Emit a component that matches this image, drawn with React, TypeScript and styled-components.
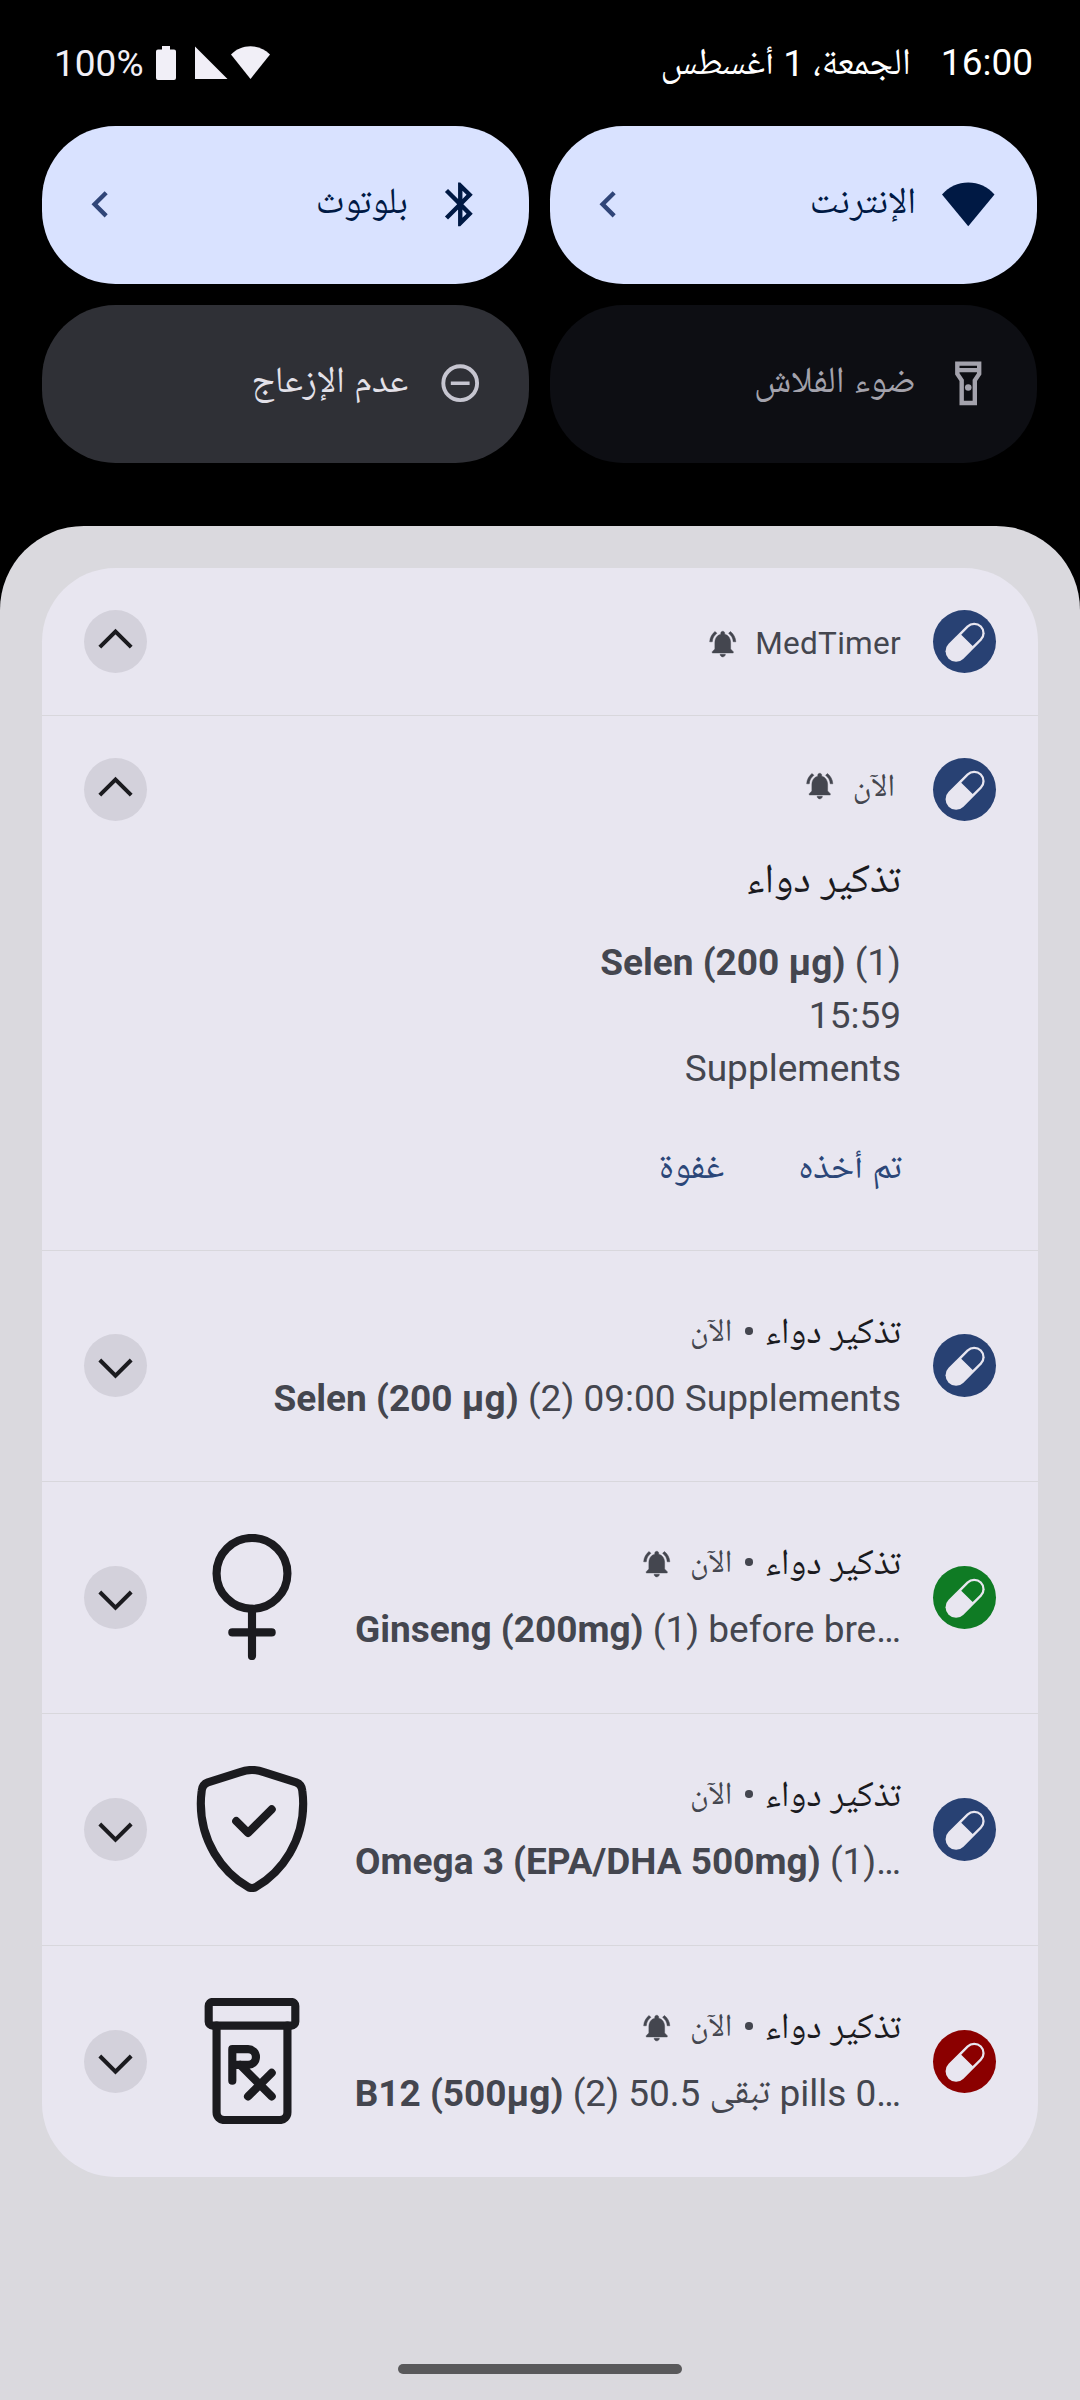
import React from "react";
import styled, { createGlobalStyle } from "styled-components";

const GlobalStyle = createGlobalStyle`
  * { box-sizing: border-box; }
  body { margin: 0; background: #000; }
`;

const ink = "#1b1b1f";
const muted = "#44464f";
const cardColor = "#e8e6f0";

const Screen = styled.div`
  width: 1080px;
  height: 2400px;
  background: #000;
  display: flex;
  flex-direction: column;
  overflow: hidden;
  font-family: Roboto, "Noto Naskh Arabic UI", "Noto Naskh Arabic", "DejaVu Sans", sans-serif;
  font-size: 37px;
`;

const StatusBar = styled.header`
  height: 126px;
  display: flex;
  justify-content: space-between;
  align-items: flex-start;
  padding: 36px 47px 0 54px;
  line-height: 54px;
`;

const StatusStart = styled.div`
  display: flex;
  gap: 30px;
  color: #fff;
`;

const DateText = styled.span`
  padding-top: 3px;
  font-size: 37.2px;
`;

const DayNumber = styled.span`
  vertical-align: 3px;
  line-height: 1;
`;

const StatusEnd = styled.div`
  display: flex;
  color: #f1eff7;
`;

const Percent = styled.span`
  margin-right: 12.5px;
  margin-top: 1px;
`;

const StatusIcons = styled.svg`
  display: block;
  margin-top: 10px;
`;

const Tiles = styled.section`
  display: grid;
  grid-template-columns: 487px 487px;
  grid-auto-rows: 158px;
  gap: 21px;
  padding: 0 43px 0 42px;
  margin-bottom: 63px;
`;

const tileLooks = {
  on: { back: "#d9e2ff", text: "#001944" },
  off: { back: "#2f3036", text: "#e3e1e9" },
  disabled: { back: "#0d0e13", text: "#a3a2ac" },
};

const Tile = styled.button<{ $look: keyof typeof tileLooks }>`
  border: 0;
  border-radius: 73.5px;
  background: ${(p) => tileLooks[p.$look].back};
  color: ${(p) => tileLooks[p.$look].text};
  display: flex;
  align-items: center;
  padding: 0 42.5px 1px 32px;
  font: inherit;
  font-size: 36.85px;
`;

const TileIcon = styled.svg`
  width: 52.5px;
  height: 52.5px;
  flex: none;
  fill: currentColor;
`;

const TileLabel = styled.span`
  flex: 1;
  text-align: right;
  margin-right: 26px;
  line-height: 48px;
  padding-top: 2px;
`;

const TileChevron = styled(TileIcon)`
  fill: #304578;
`;

const Shade = styled.main`
  flex: 1;
  background: #dad9de;
  border-radius: 84px 84px 0 0;
  padding: 42px 42px 26px;
  display: flex;
  flex-direction: column;
  justify-content: space-between;
  align-items: center;
`;

const Card = styled.section`
  width: 996px;
  background: ${cardColor};
  border-radius: 73.5px;
  overflow: hidden;
`;

const Divider = styled.hr`
  margin: 0;
  border: 0;
  height: 1px;
  background: #d8d7dc;
`;

const Row = styled.article<{ $height: number; $top?: boolean }>`
  height: ${(p) => p.$height}px;
  display: flex;
  align-items: ${(p) => (p.$top ? "flex-start" : "center")};
  padding: ${(p) => (p.$top ? "42px" : "0")} 42px ${(p) => (p.$height % 2 ? 0 : 1)}px;
`;

const Badge = styled.div<{ $color: string }>`
  width: 63px;
  height: 63px;
  flex: none;
  border-radius: 50%;
  background: ${(p) => p.$color};
`;

const Toggle = styled.button`
  width: 63px;
  height: 63px;
  flex: none;
  padding: 0;
  border: 0;
  border-radius: 50%;
  background: #d3d1db;
  margin-right: 42px;
`;

const Art = styled.svg`
  width: 126px;
  height: 126px;
  flex: none;
  margin-bottom: 1px;
  fill: none;
  stroke: ${ink};
  stroke-width: 1.55;
  stroke-linecap: round;
  stroke-linejoin: round;
`;

const Body = styled.div`
  flex: 1;
  min-width: 0;
  padding-right: 32px;
  display: flex;
  flex-direction: column;
  align-items: flex-start;
  color: ${muted};
`;

const CompactBody = styled(Body)`
  align-self: flex-start;
  padding-top: 59px;
`;

const MetaLine = styled.div<{ $inset?: boolean }>`
  height: 42px;
  line-height: 42px;
  display: flex;
  align-items: center;
  padding-right: ${(p) => (p.$inset ? 6 : 0)}px;
  margin-top: ${(p) => (p.$inset ? 7 : 0)}px;
`;

const AppName = styled.span`
  font-size: 31.5px;
  letter-spacing: 0.3px;
  padding-top: 4px;
`;

const Title = styled.span`
  color: ${ink};
  font-size: 36.5px;
  padding-top: 9px;
`;

const Dot = styled.span`
  width: 7.5px;
  height: 7.5px;
  border-radius: 50%;
  background: ${muted};
  margin: 0 12px 0 13px;
`;

const Time = styled.span`
  font-size: 31.5px;
  padding-top: 8px;
`;

const BellIcon = styled.svg<{ $drop: number }>`
  width: 31.5px;
  height: 31.5px;
  fill: ${muted};
  stroke: ${muted};
  stroke-width: 0.35;
  margin-right: 17px;
  margin-top: ${(p) => p.$drop}px;
`;

const Summary = styled.p`
  margin: 24px 0 0;
  line-height: 46px;
  white-space: nowrap;
  direction: ltr;
`;

const ArabicWord = styled.span`
  vertical-align: -2px;
  line-height: 1;
`;

const BigTitle = styled.h2`
  margin: 47px 0 0;
  font-size: 41.5px;
  font-weight: 400;
  line-height: 60px;
  color: ${ink};
`;

const Details = styled.div`
  margin-top: 22px;
  line-height: 53px;
  text-align: right;
  direction: ltr;
`;

const Actions = styled.div`
  margin-top: 49px;
  margin-right: -1px;
  display: flex;
  gap: 74px;
  color: #2b4678;
  line-height: 53px;
  font-size: 37px;
`;

const Handle = styled.div`
  width: 284px;
  height: 10px;
  border-radius: 5px;
  background: #59595b;
`;

const Bell = ({ drop = 4 }: { drop?: number }) => (
  <BellIcon $drop={drop} viewBox="0 0 24 24">
    <path d="M7.58 4.08 6.15 2.65C3.75 4.48 2.17 7.3 2.03 10.5h2c.15-2.65 1.51-4.97 3.55-6.42zm12.39 6.42h2c-.15-3.2-1.73-6.02-4.12-7.85l-1.42 1.43c2.02 1.45 3.39 3.77 3.54 6.42zM18 11c0-3.07-1.64-5.64-4.5-6.32V4c0-.83-.67-1.5-1.5-1.5s-1.5.67-1.5 1.5v.68C7.63 5.36 6 7.92 6 11v5l-2 2v1h16v-1l-2-2v-5zm-6 11c.14 0 .27-.01.4-.04.65-.14 1.18-.58 1.44-1.18.1-.24.15-.5.15-.78h-4c.01 1.1.9 2 2.01 2z" />
  </BellIcon>
);

const PillBadge = ({ color = "#284173" }: { color?: string }) => (
  <Badge $color={color}>
    <svg width="63" height="63" viewBox="0 0 63 63">
      <g transform="translate(32.1 32.2) rotate(45)">
        <rect x="-10.5" y="-23.3" width="21" height="46.6" rx="10.5" fill={cardColor} />
        <path d="M-8.1 -2.6V-13a8.1 8.1 0 0 1 16.2 0V-2.6z" fill={color} />
      </g>
    </svg>
  </Badge>
);

const ExpandToggle = ({ up = false }: { up?: boolean }) => (
  <Toggle aria-label={up ? "طي" : "توسيع"}>
    <svg width="63" height="63" viewBox="0 0 63 63" fill="none" stroke={ink} strokeWidth="4">
      <path d={up ? "M15.8 37.2 31.5 21.5 47.2 37.2" : "M15.8 26 31.5 41.7 47.2 26"} />
    </svg>
  </Toggle>
);

const Female = () => (
  <Art viewBox="0 0 24 24">
    <circle cx="12" cy="7.5" r="6.75" />
    <path d="M12 14.25v9M8.25 18.75h7.5" />
  </Art>
);

const Shield = () => (
  <Art viewBox="0 0 24 24">
    <path d="M12 .75C11.1.75 10.4.95 9.6 1.22L3.6 3.12C2.85 3.4 2.5 3.9 2.42 4.7 2.3 5.6 2.25 6.4 2.25 7.2c0 7 3.9 12.9 8.95 15.8q.8.5 1.6 0c5.05-2.9 8.95-8.8 8.95-15.8 0-.8-.05-1.6-.17-2.5-.08-.8-.43-1.3-1.18-1.58l-6-1.9C13.6.95 12.9.75 12 .75z" />
    <path d="m9 10.5 2.25 2.25 4.5-4.5" />
  </Art>
);

const Bottle = () => (
  <Art viewBox="0 0 24 24">
    <rect x="3.75" y=".75" width="16.5" height="4.5" rx=".75" />
    <path d="M5.25 5.25v16.5a1.5 1.5 0 0 0 1.5 1.5h10.5a1.5 1.5 0 0 0 1.5-1.5V5.25" />
    <path d="M8.25 15.75v-6h3a1.5 1.5 0 0 1 0 3h-3M9.75 12.75l6 6M15.75 14.25l-4.5 4.5" />
  </Art>
);

type ReminderProps = {
  color?: string;
  bell?: boolean;
  art?: React.ReactNode;
  height?: number;
  children: React.ReactNode;
};

const Reminder = ({ color, bell, art, height = 231, children }: ReminderProps) => (
  <Row $height={height}>
    <PillBadge color={color} />
    <CompactBody>
      <MetaLine>
        <Title>تذكير دواء</Title>
        <Dot />
        <Time>الآن</Time>
        {bell && <Bell />}
      </MetaLine>
      <Summary>{children}</Summary>
    </CompactBody>
    {art}
    <ExpandToggle />
  </Row>
);

const BackChevron = () => (
  <TileChevron viewBox="0 0 24 24">
    <path d="M15.41 7.41 14 6l-6 6 6 6 1.41-1.41L10.83 12z" />
  </TileChevron>
);

export default function App() {
  return (
    <>
      <GlobalStyle />
      <Screen dir="rtl">
        <StatusBar>
          <StatusStart>
            <span>16:00</span>
            <DateText>
              الجمعة، <DayNumber>1</DayNumber> أغسطس
            </DateText>
          </StatusStart>
          <StatusEnd>
            <StatusIcons width="115" height="34" viewBox="0 0 115 34" fill="currentColor">
              <path d="M6 0h8v3.5h4a2 2 0 0 1 2 2V32a2 2 0 0 1-2 2H2a2 2 0 0 1-2-2V5.5a2 2 0 0 1 2-2h4z" />
              <path d="M39 .5V33h32.5z" />
              <path d="M94.5 33 75 8.5C80 3.2 87 .2 94.5 .2S109 3.2 114 8.5z" />
            </StatusIcons>
            <Percent dir="ltr">100%</Percent>
          </StatusEnd>
        </StatusBar>

        <Tiles>
          <Tile $look="on">
            <TileIcon viewBox="0 0 24 24">
              <path d="M12 22.1 0 7.5C3.2 3.9 7.3 2 12 2s8.8 1.9 12 5.5z" />
            </TileIcon>
            <TileLabel>الإنترنت</TileLabel>
            <BackChevron />
          </Tile>
          <Tile $look="on">
            <TileIcon viewBox="0 0 24 24">
              <path d="M17.71 7.71 12 2h-1v7.59L6.41 5 5 6.41 10.59 12 5 17.59 6.41 19 11 14.41V22h1l5.71-5.71-4.3-4.29 4.3-4.29zM13 5.83l1.88 1.88L13 9.59V5.83zm1.88 10.46L13 18.17v-3.76l1.88 1.88z" />
            </TileIcon>
            <TileLabel>بلوتوث</TileLabel>
            <BackChevron />
          </Tile>
          <Tile $look="disabled">
            <TileIcon viewBox="0 0 24 24" fillRule="evenodd">
              <path d="M18 2H6v6l2 3v11h8V11l2-3zM16 4v1H8V4zM14 10.4V20h-4v-9.6L8 7.4V7h8v.4z" />
              <circle cx="12" cy="13.9" r="1.5" />
            </TileIcon>
            <TileLabel>ضوء الفلاش</TileLabel>
          </Tile>
          <Tile $look="off">
            <TileIcon viewBox="0 0 52.5 52.5">
              <circle cx="26.2" cy="26.2" r="16.9" fill="none" stroke="#c6c5d0" strokeWidth="3.9" />
              <path d="M16.8 24.5h18.8v3.5H16.8z" fill="#c6c5d0" />
            </TileIcon>
            <TileLabel>عدم الإزعاج</TileLabel>
          </Tile>
        </Tiles>

        <Shade>
          <Card>
            <Row $height={147}>
              <PillBadge />
              <Body>
                <MetaLine>
                  <AppName>MedTimer</AppName>
                  <Bell />
                </MetaLine>
              </Body>
              <ExpandToggle up />
            </Row>
            <Divider />
            <Row $height={534} $top>
              <PillBadge />
              <Body>
                <MetaLine $inset>
                  <Time>الآن</Time>
                  <Bell drop={0} />
                </MetaLine>
                <BigTitle>تذكير دواء</BigTitle>
                <Details>
                  <b>Selen (200 µg)</b> (1)
                  <br />
                  15:59
                  <br />
                  Supplements
                </Details>
                <Actions>
                  <span>تم أخذه</span>
                  <span>غفوة</span>
                </Actions>
              </Body>
              <ExpandToggle up />
            </Row>
            <Divider />
            <Reminder height={230}>
              <b>Selen (200 µg)</b> (2) 09:00 Supplements
            </Reminder>
            <Divider />
            <Reminder color="#0f7b24" bell art={<Female />}>
              <b>Ginseng (200mg)</b> (1) before bre…
            </Reminder>
            <Divider />
            <Reminder art={<Shield />}>
              <b>Omega 3 (EPA/DHA 500mg)</b> (1)…
            </Reminder>
            <Divider />
            <Reminder color="#8b0000" bell art={<Bottle />}>
              <b>B12 (500µg)</b> (2) 50.5 <ArabicWord>تبقى</ArabicWord> pills 0…
            </Reminder>
          </Card>
          <Handle />
        </Shade>
      </Screen>
    </>
  );
}
